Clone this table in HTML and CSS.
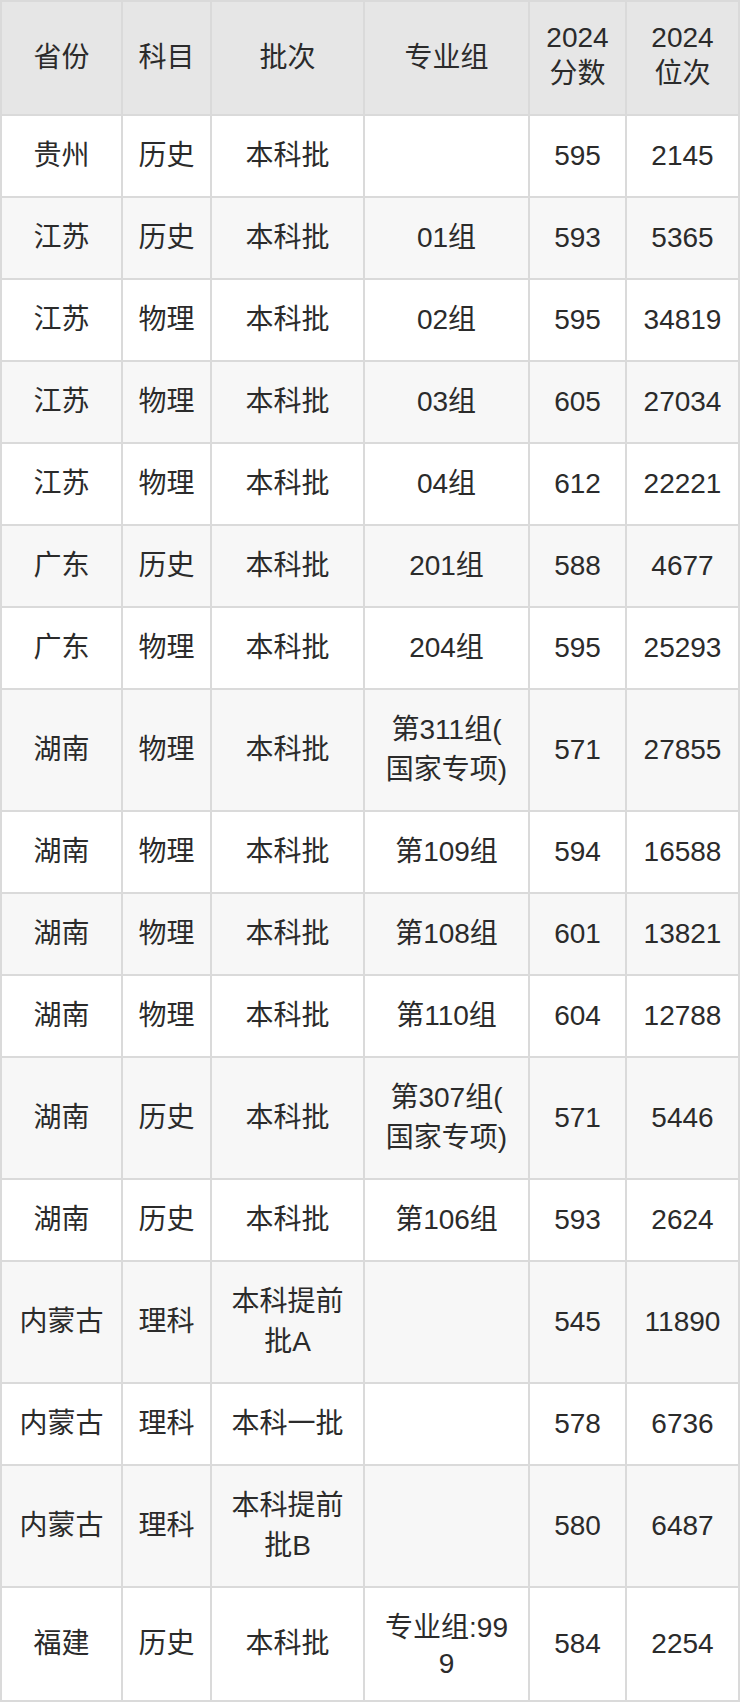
FILE: index.html
```html
<!DOCTYPE html>
<html lang="zh-CN">
<head>
<meta charset="utf-8">
<title>分数线</title>
<link rel="stylesheet" href="styles.css">
</head>
<body>
<table class="score">
  <colgroup>
    <col class="c1"><col class="c2"><col class="c3"><col class="c4"><col class="c5"><col class="c6">
  </colgroup>
  <thead>
    <tr class="head">
      <th>省份</th><th>科目</th><th>批次</th><th>专业组</th>
      <th><span class="lat">2024</span><span class="cjk">分数</span></th>
      <th><span class="lat">2024</span><span class="cjk">位次</span></th>
    </tr>
  </thead>
  <tbody>
    <tr class="one"><td>贵州</td><td>历史</td><td>本科批</td><td></td><td>595</td><td>2145</td></tr>
    <tr class="one"><td>江苏</td><td>历史</td><td>本科批</td><td>01组</td><td>593</td><td>5365</td></tr>
    <tr class="one"><td>江苏</td><td>物理</td><td>本科批</td><td>02组</td><td>595</td><td>34819</td></tr>
    <tr class="one"><td>江苏</td><td>物理</td><td>本科批</td><td>03组</td><td>605</td><td>27034</td></tr>
    <tr class="one"><td>江苏</td><td>物理</td><td>本科批</td><td>04组</td><td>612</td><td>22221</td></tr>
    <tr class="one"><td>广东</td><td>历史</td><td>本科批</td><td>201组</td><td>588</td><td>4677</td></tr>
    <tr class="one"><td>广东</td><td>物理</td><td>本科批</td><td>204组</td><td>595</td><td>25293</td></tr>
    <tr class="two"><td>湖南</td><td>物理</td><td>本科批</td><td><span class="cjk">第311组(</span><span class="cjk">国家专项)</span></td><td>571</td><td>27855</td></tr>
    <tr class="one"><td>湖南</td><td>物理</td><td>本科批</td><td>第109组</td><td>594</td><td>16588</td></tr>
    <tr class="one"><td>湖南</td><td>物理</td><td>本科批</td><td>第108组</td><td>601</td><td>13821</td></tr>
    <tr class="one"><td>湖南</td><td>物理</td><td>本科批</td><td>第110组</td><td>604</td><td>12788</td></tr>
    <tr class="two"><td>湖南</td><td>历史</td><td>本科批</td><td><span class="cjk">第307组(</span><span class="cjk">国家专项)</span></td><td>571</td><td>5446</td></tr>
    <tr class="one"><td>湖南</td><td>历史</td><td>本科批</td><td>第106组</td><td>593</td><td>2624</td></tr>
    <tr class="two"><td>内蒙古</td><td>理科</td><td><span class="cjk">本科提前</span><span class="cjk">批A</span></td><td></td><td>545</td><td>11890</td></tr>
    <tr class="one"><td>内蒙古</td><td>理科</td><td>本科一批</td><td></td><td>578</td><td>6736</td></tr>
    <tr class="two"><td>内蒙古</td><td>理科</td><td><span class="cjk">本科提前</span><span class="cjk">批B</span></td><td></td><td>580</td><td>6487</td></tr>
    <tr class="last"><td>福建</td><td>历史</td><td>本科批</td><td><span class="cjk">专业组:99</span><span class="lat">9</span></td><td>584</td><td>2254</td></tr>
  </tbody>
</table>
</body>
</html>
```

FILE: styles.css
```css
html, body {
  margin: 0;
  padding: 0;
  background: #ffffff;
}

.score {
  width: 740px;
  table-layout: fixed;
  border-collapse: separate;
  border-spacing: 2px;
  background: #dadada;
  font-family: "Liberation Sans", "Noto Sans CJK SC", sans-serif;
  font-size: 28px;
  color: #2b2b2b;
}

.c1 { width: 119px; }
.c2 { width: 87px; }
.c3 { width: 151px; }
.c4 { width: 163px; }
.c5 { width: 95px; }
.c6 { width: 111px; }

.score th,
.score td {
  padding: 0 12px;
  text-align: center;
  vertical-align: middle;
  line-height: 40px;
  font-weight: normal;
  white-space: nowrap;
  overflow: hidden;
}

.score th {
  background: #e6e6e6;
}

.score tbody tr:nth-child(odd) td {
  background: #ffffff;
}

.score tbody tr:nth-child(even) td {
  background: #f7f7f7;
}

.head { height: 112px; }
.one { height: 80px; }
.two { height: 120px; }
.last { height: 112px; }

.lat {
  display: block;
  line-height: 32px;
}

.cjk {
  display: block;
  line-height: 40px;
}
```
